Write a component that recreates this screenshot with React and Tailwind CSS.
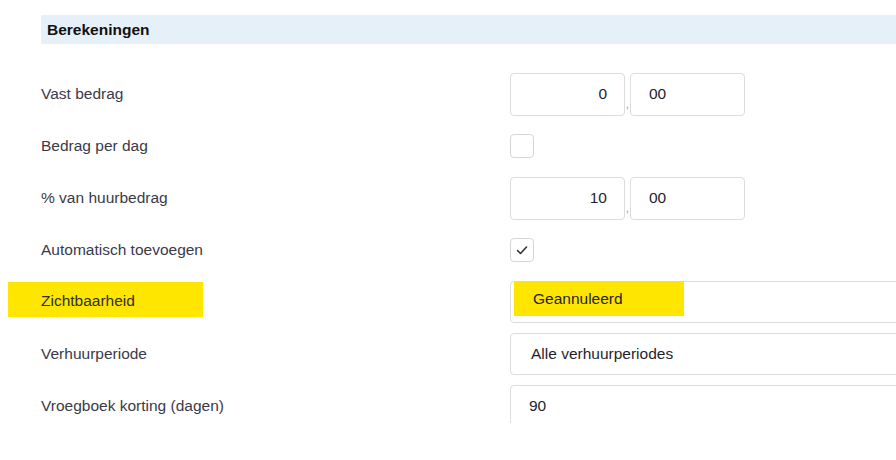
export default function App() {
    const font = { fontFamily: '"Liberation Sans", Arial, sans-serif' };

    const Box = ({ className = "", children }) => (
        <div className={"h-[43px] border border-[#dcdcdc] rounded-[4px] bg-white flex items-center text-[#1f1f2e] " + className}>
            {children}
        </div>
    );

    const Check = ({ checked }) => (
        <div className="w-[24px] h-[24px] border border-[#d6d6d6] rounded-[4px] bg-white flex items-center justify-center">
            {checked && (
                <svg width="14" height="14" viewBox="0 0 14 14" fill="none">
                    <path d="M2.5 7.5 L5.5 10.5 L11.5 4" stroke="#333" strokeWidth="1.6" strokeLinecap="round" strokeLinejoin="round" />
                </svg>
            )}
        </div>
    );

    const Decimal = ({ whole }) => (
        <div className="flex items-end">
            <Box className="w-[115px] justify-end pr-[17px]">{whole}</Box>
            <span className="w-[5px] text-[10px] leading-none mb-[6px] text-[#888] text-center">,</span>
            <Box className="w-[115px] pl-[18px]">00</Box>
        </div>
    );

    const rows = [
        { label: "Vast bedrag", control: <Decimal whole="0" /> },
        { label: "Bedrag per dag", control: <Check /> },
        { label: "% van huurbedrag", control: <Decimal whole="10" /> },
        { label: "Automatisch toevoegen", control: <Check checked /> },
        {
            label: "Zichtbaarheid",
            mark: true,
            control: (
                <div className="relative w-[420px] h-[42px] border border-[#dcdcdc] rounded-[4px] bg-white flex items-center pl-[22px] text-[#1f1f2e]">
                    <div className="absolute left-[3px] top-[-1px] w-[170px] h-[35px] bg-[#ffe600]" />
                    <span className="relative -mt-[6px]">Geannuleerd</span>
                </div>
            ),
        },
        {
            label: "Verhuurperiode",
            control: (
                <div className="w-[420px] h-[42px] border border-[#dcdcdc] rounded-[4px] bg-white flex items-center pl-[20px] text-[#1f1f2e]">
                    Alle verhuurperiodes
                </div>
            ),
        },
        {
            label: "Vroegboek korting (dagen)",
            control: (
                <div className="w-[420px] h-[43px] border border-[#dcdcdc] rounded-[4px] bg-white flex items-center pl-[18px] text-[#1f1f2e]">
                    90
                </div>
            ),
        },
    ];

    return (
        <div className="w-[896px] h-[460px] bg-white overflow-hidden text-[15.5px]" style={font}>
            <div className="pt-[15px] pl-[41px]">
                <div className="h-[29px] bg-[#e6f0f8] flex items-center pl-[6px] font-bold text-[#111]">
                    Berekeningen
                </div>
            </div>
            <div className="h-[379px] overflow-hidden pt-[24px]">
                {rows.map((r) => (
                    <div key={r.label} className="h-[52px] flex items-center">
                        <div className="w-[510px] shrink-0 flex items-center">
                            {r.mark ? (
                                <div className="relative top-[-3px] ml-[8px] w-[195px] h-[35px] bg-[#ffe600] flex items-center pl-[33px] pt-[4px] text-[#2f2f2f]">
                                    {r.label}
                                </div>
                            ) : (
                                <span className="pl-[41px] text-[#3a3a48]">{r.label}</span>
                            )}
                        </div>
                        <div className="shrink-0">{r.control}</div>
                    </div>
                ))}
            </div>
        </div>
    );
}
